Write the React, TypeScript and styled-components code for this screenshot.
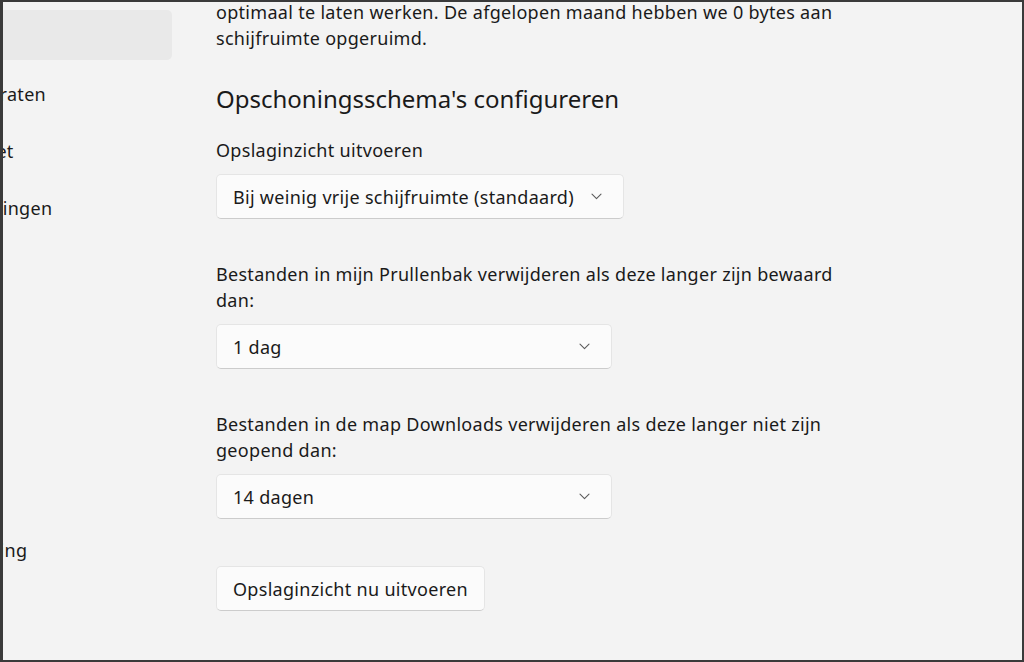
import React from "react";
import styled, { createGlobalStyle } from "styled-components";

const GlobalStyle = createGlobalStyle`
  html, body {
    margin: 0;
    padding: 0;
    background: #f3f3f3;
  }
  * {
    box-sizing: border-box;
  }
`;

const navItems = [
  "Systeem",
  "Bluetooth en apparaten",
  "Netwerk en internet",
  "Persoonlijke instellingen",
  "Apps",
  "Accounts",
  "Tijd en taal",
  "Gaming",
  "Toegankelijkheid",
  "Privacy en beveiliging",
  "Windows Update",
];

const Chevron = () => (
  <svg width="11" height="7" viewBox="0 0 11 7" fill="none">
    <path d="M1 1.2 L5.5 5.6 L10 1.2" stroke="#5c5c5c" strokeWidth="1.1" strokeLinecap="round" strokeLinejoin="round" />
  </svg>
);

export default function App() {
  return (
    <>
      <GlobalStyle />
      <Frame>
        <Sidebar>
          {navItems.map((item, i) => (
            <NavItem key={item} $active={i === 0}>
              <NavText>{i === 0 ? "" : item}</NavText>
            </NavItem>
          ))}
        </Sidebar>
        <Content>
          <Intro>
            optimaal te laten werken. De afgelopen maand hebben we 0 bytes aan
            <br />
            schijfruimte opgeruimd.
          </Intro>
          <Heading>Opschoningsschema's configureren</Heading>

          <Group $first>
            <Label>Opslaginzicht uitvoeren</Label>
            <Select $width={408}>
              <span>Bij weinig vrije schijfruimte (standaard)</span>
              <Chevron />
            </Select>
          </Group>

          <Group>
            <Label>
              Bestanden in mijn Prullenbak verwijderen als deze langer zijn bewaard
              <br />
              dan:
            </Label>
            <Select $width={396}>
              <span>1 dag</span>
              <Chevron />
            </Select>
          </Group>

          <Group>
            <Label>
              Bestanden in de map Downloads verwijderen als deze langer niet zijn
              <br />
              geopend dan:
            </Label>
            <Select $width={396}>
              <span>14 dagen</span>
              <Chevron />
            </Select>
          </Group>

          <Button>Opslaginzicht nu uitvoeren</Button>
        </Content>
      </Frame>
    </>
  );
}

const Frame = styled.div`
  width: 1024px;
  height: 662px;
  overflow: hidden;
  display: flex;
  background: #f3f3f3;
  border-top: 2px solid #3a3a3a;
  border-left: 3px solid #3a3a3a;
  border-right: 2px solid #3a3a3a;
  border-bottom: 2px solid #3a3a3a;
  font-family: "Noto Sans", "Open Sans", sans-serif;
  font-size: 18px;
  letter-spacing: 0.3px;
  color: #1a1a1a;
`;

const Sidebar = styled.nav`
  flex: 0 0 auto;
  width: 300px;
  margin-left: -131px;
  padding-top: 8px;
  display: flex;
  flex-direction: column;
  gap: 7px;
`;

const NavItem = styled.div<{ $active?: boolean }>`
  flex: 0 0 50px;
  border-radius: 5px;
  display: flex;
  align-items: center;
  background: ${(p) => (p.$active ? "#e9e9e9" : "transparent")};
`;

const NavText = styled.span`
  white-space: nowrap;
  margin-left: -34px;
  padding-top: 4px;
`;

const Content = styled.main`
  flex: 1;
  padding-left: 44px;
  margin-top: -3px;
`;

const Intro = styled.p`
  margin: 0;
  line-height: 26px;
`;

const Heading = styled.h2`
  margin: 32px 0 0;
  font-size: 24px;
  line-height: 32px;
  font-weight: 400;
  letter-spacing: 0;
`;

const Group = styled.section<{ $first?: boolean }>`
  margin-top: ${(p) => (p.$first ? "22px" : "42px")};
  display: flex;
  flex-direction: column;
  align-items: flex-start;
  gap: 11px;
`;

const Label = styled.div`
  line-height: 26px;
`;

const Select = styled.div<{ $width: number }>`
  width: ${(p) => p.$width}px;
  height: 45px;
  padding: 0 21px 0 16px;
  display: flex;
  align-items: center;
  justify-content: space-between;
  background: #fbfbfb;
  border: 1px solid #e5e5e5;
  border-bottom-color: #cccccc;
  border-radius: 5px;
`;

const Button = styled.button`
  margin-top: 47px;
  height: 45px;
  padding: 0 16px;
  background: #fbfbfb;
  border: 1px solid #e5e5e5;
  border-bottom-color: #cccccc;
  border-radius: 5px;
  font-family: inherit;
  font-size: inherit;
  letter-spacing: inherit;
  color: #1a1a1a;
`;
